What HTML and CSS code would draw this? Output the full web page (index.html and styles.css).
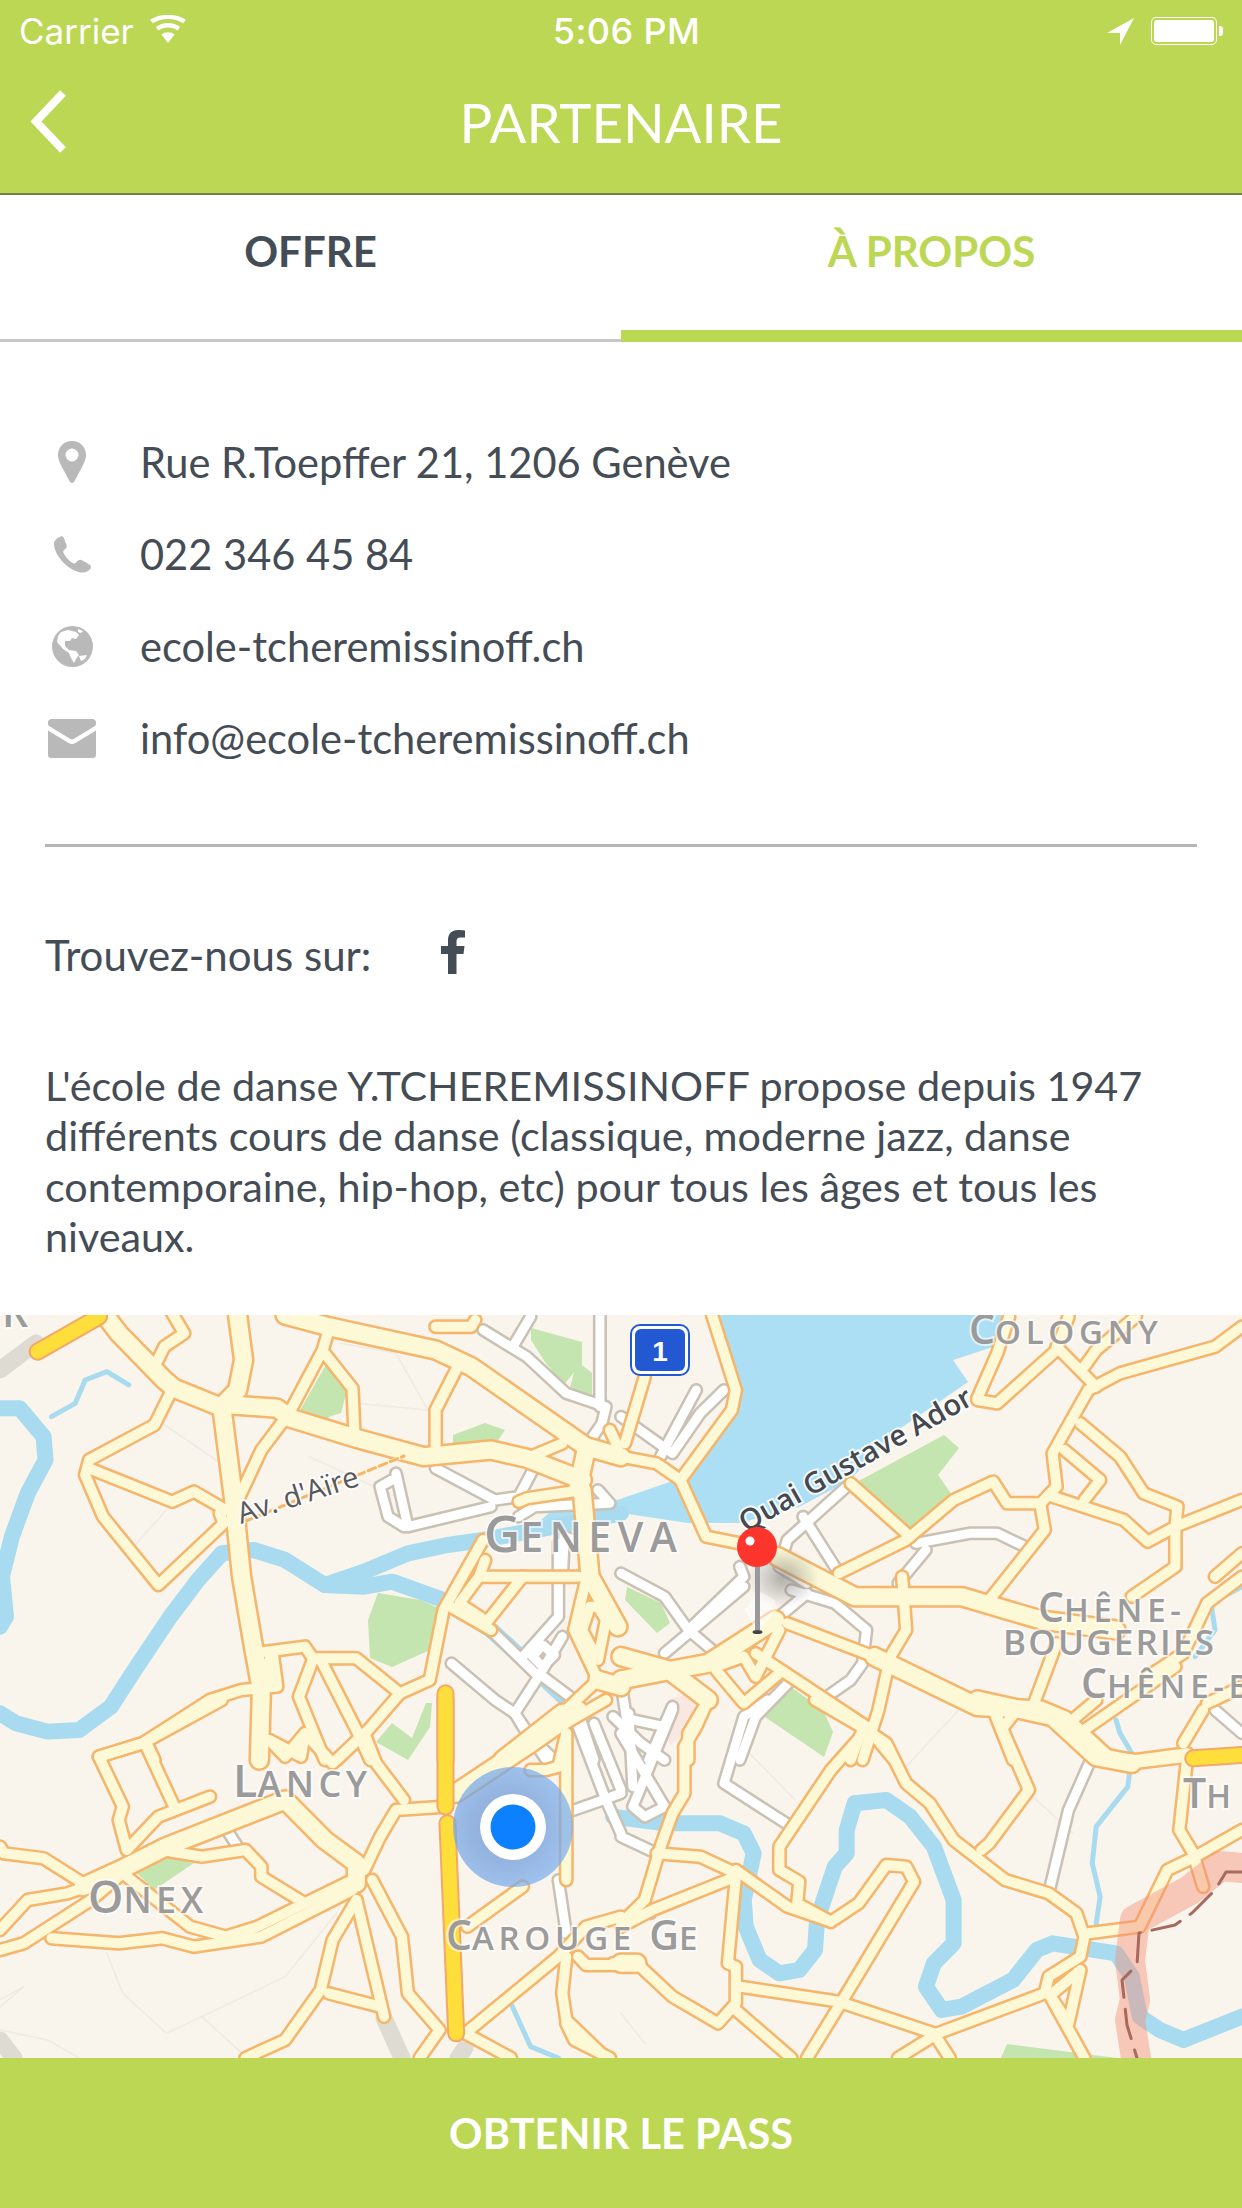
FILE: index.html
```html
<!DOCTYPE html>
<html lang="fr">
<head>
<meta charset="utf-8">
<title>Partenaire</title>
<link rel="stylesheet" href="styles.css">
</head>
<body>
<div class="page">
  <header class="top">
    <div class="status">
      <div class="status-left">
        <span class="carrier">Carrier</span>
        <svg class="wifi" viewBox="0 0 38 28"><path d="M19 28 12.500 19.500C16 16.500 22 16.500 25.500 19.500Z"/><path d="M9.500 15.500 6.800 12C13.500 6.800 24.500 6.800 31.200 12L28.500 15.500C23 11.500 15 11.500 9.500 15.500Z"/><path d="M3.800 8.200 1 4.800C11 -1.800 27-1.800 37 4.800L34.200 8.200C25.500 2.500 12.500 2.500 3.800 8.200Z"/></svg>
      </div>
      <span class="clock">5:06 PM</span>
      <div class="status-right">
        <svg class="arrow" viewBox="0 0 27 27"><path d="M27 0 0 15H13V27Z"/></svg>
        <div class="battery"><div class="battery-fill"></div></div>
        <div class="battery-nub"></div>
      </div>
    </div>
    <div class="nav">
      <svg class="back" viewBox="0 0 38 63"><path d="M33 3 6 31.500 33 60"/></svg>
      <h1 class="nav-title">PARTENAIRE</h1>
    </div>
  </header>

  <nav class="tabs">
    <div class="tab">OFFRE</div>
    <div class="tab tab-active">À PROPOS</div>
  </nav>

  <section class="contact">
    <div class="row">
      <span class="ico"><svg class="ico-pin" viewBox="0 0 28 42"><path fill-rule="evenodd" d="M14 0C6 0 0 6 0 14 0 19 3 24 5 28L12 41C13 42.300 15 42.300 16 41L23 28C25 24 28 19 28 14 28 6 22 0 14 0ZM14 7.500A6.500 6.500 0 1 1 14 20.500 6.500 6.500 0 1 1 14 7.500Z"/></svg></span>
      <span class="row-text">Rue R.Toepffer 21, 1206 Genève</span>
    </div>
    <div class="row">
      <span class="ico"><svg class="ico-phone" viewBox="0 0 38 37"><path d="M8 .5C5 1.500 1.500 4 1 7 .5 14 6 23 13 29 18 33.500 25 37 31 36.500 34 36 38 33.500 38 31 38 29.500 37 29 35.500 28L29.500 24.500C27.500 23.500 26 23.500 24.500 25L22.500 27C21.500 27.800 20.500 27.500 19.500 27 15.500 24.500 13 21.500 10.800 17.500 10 16 10.200 15 11 14L12.800 12.500C14 11 14 10 13.200 8L10.800 2C10.200.5 9.300 0 8 .5Z"/></svg></span>
      <span class="row-text">022 346 45 84</span>
    </div>
    <div class="row">
      <span class="ico"><svg class="ico-globe" viewBox="0 0 41 41"><circle class="globe-disc" cx="20.500" cy="20.500" r="20.500"/><path class="globe-land" d="M9 6 16 4 24 6 27 9 24 13 20 12 18 15 13 15 13 20 17 24 24 25 27 29 24 33 22 37 19 32 17 27 11 23 5 16 6 10Z"/><path class="globe-land" d="M27 30 35 29 33 33 29 35Z"/><path class="globe-land" d="M26 3 31 5 29 7 26 6Z"/></svg></span>
      <span class="row-text">ecole-tcheremissinoff.ch</span>
    </div>
    <div class="row">
      <span class="ico"><svg class="ico-mail" viewBox="0 0 48 39"><path d="M4 0H44C46.500 0 48 1.500 48 3.500V5C48 6 47.300 6.800 46.500 7.300L26 19.800C24.700 20.500 23.300 20.500 22 19.800L1.500 7.300C.7 6.800 0 6 0 5V3.500C0 1.500 1.500 0 4 0Z"/><path d="M0 11.500 20.500 24C23 25.500 25 25.500 27.500 24L48 11.500V36C48 37.800 46.800 39 45 39H3C1.200 39 0 37.800 0 36Z"/></svg></span>
      <span class="row-text">info@ecole-tcheremissinoff.ch</span>
    </div>
  </section>

  <hr class="divider">

  <div class="social">
    <span class="social-label">Trouvez-nous sur:</span>
    <svg class="fb" viewBox="0 0 24 44"><path d="M7 44V24H0V16H7V10C7 3.500 11 0 17 0 20 0 22.500.2 24 .5V7.500H19.500C16.500 7.500 15.500 9 15.500 11.500V16H23.500L22.500 24H15.500V44Z"/></svg>
  </div>

  <p class="about">L'école de danse Y.TCHEREMISSINOFF propose depuis 1947 différents cours de danse (classique, moderne jazz, danse contemporaine, hip-hop, etc) pour tous les âges et tous les niveaux.</p>

  <div class="map">
    <svg class="map-svg" viewBox="0 1315 1242 743" width="1242" height="743">
      <defs>
        <radialGradient id="pin-shadow"><stop offset="0" stop-color="#777" stop-opacity=".55"/><stop offset="1" stop-color="#777" stop-opacity="0"/></radialGradient>
        <radialGradient id="loc-grad" cx=".45" cy=".5" r=".6"><stop offset="0" stop-color="#5f86c4"/><stop offset="1" stop-color="#7fb4f4"/></radialGradient>

        <g id="water-wide">
          <g transform="translate(0 1310) scale(.396 .3333)">
            <path d="M0 295 50 295 110 380 115 450 70 550 30 680 5 800 15 920 0 950"/>
            <path d="M0 1210 40 1240 120 1265 200 1260 280 1190 340 1080 430 920 500 810 560 730 640 720 720 750 820 825 920 785 1030 730 1130 705 1220 690 1400 650 1568 610"/>
            <path d="M820 825 920 830 990 815 1120 870 1240 960 1360 1090 1450 1190"/>
          </g>
          <g transform="translate(621 1700) scale(.396 .3333)">
            <path d="M-20 350 110 370 250 370 310 400 335 460 310 600 315 680 350 780 400 820 450 810 490 750 495 660 540 500 570 460 570 390 590 310 670 300 730 350 790 440 840 600 840 730 790 790 770 860 810 930 860 920 990 840 1050 750 1090 730 1250 760 1290 830 1310 950 1360 990 1420 1020 1568 950"/>
          </g>
        </g>
        <g id="water-thin">
          <g transform="translate(0 1310) scale(.396 .3333)">
            <path d="M130 320 190 280 215 210 270 185 325 225"/>
          </g>
          <g transform="translate(621 1310) scale(.396 .3333)">
            <path d="M1250 1230 1260 1270 1290 1330"/>
            <path d="M1568 830 1490 880 1500 960 1450 1040"/>
          </g>
          <g transform="translate(0 1700) scale(.396 .3333)">
            <path d="M1290 910 1340 1040 1410 1074"/>
          </g>
          <g transform="translate(621 1700) scale(.396 .3333)">
            <path d="M1290 160 1280 260 1200 380 1190 490 1210 590 1200 670"/>
          </g>
        </g>

        <g id="white-roads">
          <g transform="translate(0 1310) scale(.396 .3333)">
            <path d="M1220 60 1330 140 1430 250 1530 290 1520 340 1480 410"/>
            <path d="M1340 20 1300 100"/>
            <path d="M1515 15V290"/>
            <path d="M1100 475 1250 570 1310 560 1350 470"/>
            <path d="M1240 590 1030 650 1000 490"/>
            <path d="M1020 650 980 620 960 530 990 510"/>
            <path d="M1310 620 1350 590 1540 580 1510 540"/>
            <path d="M1410 700V920L1320 1040"/>
            <path d="M1240 960 1360 1100 1300 1210 1330 1270 1400 1350"/>
            <path d="M1420 980 1360 1100"/>
            <path d="M1140 1060 1250 1170 1300 1210"/>
            <path d="M1360 1090 1450 1170 1500 1350"/>
            <path d="M1450 690 1425 680 1420 800"/>
            <path d="M1345 1040 1370 1005 1400 1035 1370 1070Z"/>
          </g>
          <g transform="translate(621 1310) scale(.396 .3333)">
            <path d="M0 320 130 430 200 310 260 240"/>
            <path d="M190 240 100 440"/>
            <path d="M570 530 420 690 400 770 470 820"/>
            <path d="M460 620 540 770"/>
            <path d="M745 700 880 670 950 670 1020 710"/>
            <path d="M770 720 700 820"/>
            <path d="M0 790 110 860 170 960 250 1040"/>
            <path d="M170 960 310 800 300 770"/>
            <path d="M310 830 180 960 110 1030"/>
            <path d="M430 840 540 880 620 960 610 1060 580 1110 520 1160"/>
            <path d="M470 850 390 930"/>
            <path d="M430 1110 340 1220 300 1350"/>
            <path d="M0 1120 30 1350"/>
            <path d="M130 1190 70 1350"/>
            <path d="M30 1230 110 1250"/>
            <path d="M-20 1220 50 1300 110 1350"/>
          </g>
          <g transform="translate(0 1700) scale(.396 .3333)">
            <path d="M570 385 600 440"/>
            <path d="M1450 330 1510 305 1568 280"/>
            <path d="M1410 540 1430 700"/>
            <path d="M1300 40 1380 180"/>
            <path d="M1460 80 1530 300 1568 400"/>
            <path d="M1500 70 1568 270"/>
          </g>
          <g transform="translate(621 1700) scale(.396 .3333)">
            <path d="M1190 170 1130 330 1080 580"/>
            <path d="M430 380 260 250 310 50 370 0"/>
            <path d="M0 100 110 320"/>
            <path d="M130 30 30 320 60 350 110 320"/>
            <path d="M0 410 90 460"/>
            <path d="M60 620 75 640"/>
            <path d="M1500 30 1568 100"/>
            <path d="M20 40 30 260"/>
          </g>
        </g>

        <g id="thin-roads">
          <g transform="translate(0 1310) scale(.396 .3333)">
            <path d="M430 0 465 70 415 110 390 170"/>
            <path d="M820 130 890 235 895 365"/>
            <path d="M1100 430 1100 300 1160 160"/>
            <path d="M430 250 390 345 225 450 215 495 260 620 400 825 565 640 555 610"/>
            <path d="M225 475 435 575 490 545 570 600"/>
            <path d="M830 60 815 120 730 310 660 420 605 560"/>
            <path d="M1420 400 1330 445"/>
            <path d="M640 1030 770 1010 790 1045 900 1045 1010 1150 1085 1110 1120 900 1220 690"/>
            <path d="M1310 575 1330 565 1470 540"/>
            <path d="M1220 800 1460 800"/>
            <path d="M1225 750 1210 800 1160 880 1230 935 1320 800"/>
            <path d="M1130 885 1240 960"/>
            <path d="M1480 810 1450 960 1510 1110 1420 1210"/>
            <path d="M1490 890 1510 890 1530 930 1510 1050 1470 960Z"/>
            <path d="M250 1340 360 1300 530 1170 610 1140 700 1130 690 1040"/>
            <path d="M810 1050 900 1260 935 1350"/>
            <path d="M790 1050 755 1160 820 1350"/>
            <path d="M1010 1150 930 1260 850 1350"/>
            <path d="M370 1300 390 1350"/>
            <path d="M1540 360 1560 410"/>
            <path d="M1100 50 1190 50 1200 30"/>
            <path d="M660 1110 680 1120 680 1050"/>
          </g>
          <g transform="translate(621 1310) scale(.396 .3333)">
            <path d="M230 15 290 240 280 300 150 510 215 680 300 700"/>
            <path d="M60 200 10 400"/>
            <path d="M0 440 90 460 150 510"/>
            <path d="M550 790 720 690 840 570 940 515 975 580 1060 580 1100 530 1090 430 1180 240 1260 190 1500 110 1568 50"/>
            <path d="M580 520 730 680"/>
            <path d="M1060 590 1070 660 930 870"/>
            <path d="M1090 560 1270 630 1330 695 1400 650 1405 590 1320 550 1260 440 1160 340"/>
            <path d="M1400 650 1568 570"/>
            <path d="M1400 650 1400 770 1290 860"/>
            <path d="M1120 420 1210 510 1170 570"/>
            <path d="M900 270 950 280 1100 120 1130 20"/>
            <path d="M900 265 950 130 980 20"/>
            <path d="M1100 110 1200 230"/>
            <path d="M1170 170 1200 120 1300 20"/>
            <path d="M710 800 720 960 680 1040 650 1200 610 1350"/>
            <path d="M420 940 640 1040"/>
            <path d="M1220 1340 1300 1350 1430 1330"/>
            <path d="M400 960 340 1100 310 1040 240 1070"/>
            <path d="M340 1030 620 1250 690 1350"/>
            <path d="M240 1080 310 1180 400 1090"/>
            <path d="M1100 1000 1040 1190"/>
            <path d="M1400 1070 1170 1260"/>
            <path d="M1568 800 1480 880 1420 1030 1330 1100"/>
            <path d="M120 1090 220 1170 170 1270 170 1350"/>
            <path d="M580 1350 610 1260"/>
            <path d="M940 1200 990 1350"/>
            <path d="M1000 1200 960 1260"/>
            <path d="M1568 730 1500 800"/>
            <path d="M1480 1180 1568 1130"/>
          </g>
          <g transform="translate(0 1700) scale(.396 .3333)">
            <path d="M250 170 360 130 560 0"/>
            <path d="M250 170 310 320 300 360 320 450 400 350 530 290"/>
            <path d="M370 140 440 320"/>
            <path d="M0 440 10 460 110 475 210 550"/>
            <path d="M0 690 70 600 170 580 220 560"/>
            <path d="M0 750 60 730 230 600 320 510"/>
            <path d="M130 715 300 730 410 715 490 740 660 710 890 570"/>
            <path d="M320 530 480 680 570 710 650 680 770 610 660 530 660 500 620 450 510 470 430 455"/>
            <path d="M770 610 890 540"/>
            <path d="M920 510 960 410 1000 330 1120 320"/>
            <path d="M900 600 840 720 810 870 720 1020 620 1074"/>
            <path d="M900 600 960 900 970 950"/>
            <path d="M830 880 960 920"/>
            <path d="M940 540 1015 710 1030 880 1110 990 1060 1074"/>
            <path d="M655 0V160"/>
            <path d="M680 120 760 170 770 100 720 170 680 120"/>
            <path d="M770 100 840 190 920 100 950 190 1020 300"/>
            <path d="M1150 280 1340 130 1530 0"/>
            <path d="M1180 680 1320 560"/>
            <path d="M1175 1000 1410 770 1480 680 1568 650"/>
            <path d="M1430 770 1420 880 1430 960 1530 1074"/>
            <path d="M1460 770 1480 795 1568 795"/>
            <path d="M1175 1000 1290 1074"/>
            <path d="M1410 200 1430 100"/>
            <path d="M1430 100V540"/>
            <path d="M1340 210 1380 210 1410 200"/>
            <path d="M1430 970 1450 1020 1540 1074"/>
          </g>
          <g transform="translate(621 1700) scale(.396 .3333)">
            <path d="M220 0 190 80 160 140 160 280 130 340 100 440 60 600 0 670"/>
            <path d="M490 0 620 90 670 130 720 250 780 310 840 420 970 540 1080 580 1150 640 1170 710 1160 770 1080 830 1070 880 800 1000 700 1074"/>
            <path d="M620 90 530 210 400 440 400 510 450 545 445 610 530 665 600 610 670 495 720 500 740 545 560 900 470 1074"/>
            <path d="M-20 790 40 790 130 890 245 970 290 910 290 800 270 790 290 530 80 630 0 680"/>
            <path d="M290 510 420 620 530 665"/>
            <path d="M90 460 200 470 290 520"/>
            <path d="M290 930 430 1074"/>
            <path d="M300 860 550 905 790 1000 830 1074"/>
            <path d="M950 50 1030 270 930 430 910 450"/>
            <path d="M1430 170 1410 390 1450 470 1568 390"/>
            <path d="M1450 470 1380 510 1310 680 1180 700"/>
            <path d="M1450 480 1470 560"/>
            <path d="M1420 130 1470 30"/>
            <path d="M1090 880 1160 810 1130 970 1080 880 1170 1074"/>
            <path d="M1190 170 1290 190 1430 170"/>
            <path d="M1130 70 1200 0"/>
          </g>
        </g>

        <g id="wide-roads">
          <g transform="translate(0 1310) scale(.396 .3333)">
            <path d="M265 15 300 70 415 210 440 235 555 290 590 285 700 295 735 325 900 385 1070 440 1240 420 1330 445 1470 510"/>
            <path d="M600 15 615 150 600 240 560 290 590 570 610 800 640 1010 660 1140 655 1350"/>
            <path d="M720 15 830 50 1100 120 1190 170 1480 410 1568 440"/>
            <path d="M1470 540 1490 800 1560 950"/>
            <path d="M1510 1110 1568 1130"/>
            <path d="M1420 1210 1270 1350"/>
            <path d="M1480 420 1460 530"/>
          </g>
          <g transform="translate(621 1310) scale(.396 .3333)">
            <path d="M395 740 590 860 860 860 1060 930 1250 960"/>
            <path d="M640 1040 900 1190 1060 1200 1120 1230 1220 1340"/>
            <path d="M0 1110 130 1080 220 1060 390 930"/>
            <path d="M0 1040 120 1080 220 1170"/>
          </g>
          <g transform="translate(0 1700) scale(.396 .3333)">
            <path d="M320 500 420 440 720 300 820 420 900 490 900 550"/>
            <path d="M210 560 320 500"/>
            <path d="M1150 280 1340 130 1460 30"/>
          </g>
          <g transform="translate(621 1700) scale(.396 .3333)">
            <path d="M900 0 1090 50 1200 170 1290 190"/>
            <path d="M0 790 40 790"/>
          </g>
        </g>

        <g id="highways">
          <g transform="translate(0 1310) scale(.396 .3333)">
            <path d="M95 125 250 20"/>
            <path d="M1125 1150V1350"/>
          </g>
          <g transform="translate(0 1700) scale(.396 .3333)">
            <path d="M1125 0V320"/>
            <path d="M1130 370 1152 1000"/>
          </g>
          <g transform="translate(621 1700) scale(.396 .3333)">
            <path d="M1445 175 1568 165"/>
          </g>
        </g>
      </defs>

      <rect class="land" x="0" y="1315" width="1242" height="743"/>

      <g transform="translate(0 1310) scale(.396 .3333)" class="lines">
        <path d="M410 340 570 470"/><path d="M860 100 1000 130 1080 300"/><path d="M900 280 1080 300"/><path d="M780 440 1000 560"/><path d="M330 720 420 600"/>
      </g>
      <g transform="translate(0 1700) scale(.396 .3333)" class="lines">
        <path d="M0 900 60 860 40 880 0 920"/><path d="M270 760 310 880 420 1000 510 950 620 1070"/><path d="M510 950 720 830 850 640"/><path d="M0 990 120 1020 200 1074"/>
      </g>
      <g transform="translate(621 1700) scale(.396 .3333)" class="lines">
        <path d="M0 940 60 1030"/><path d="M720 200 860 20"/><path d="M300 130 440 300"/><path d="M1040 290 1140 400"/>
      </g>

      <g class="grey-road">
        <path d="M0 1370 36 1343"/><path d="M0 2040 14 2058"/><path d="M384 2018 402 2058"/><path d="M465 2048 458 2058"/>
      </g>

      <path class="park" d="M327 1363 347 1390 341 1413 329 1417 327 1422 299 1412Z"/>
      <path class="park" d="M453 1435 485 1423 505 1430 495 1445 453 1447Z"/>
      <path class="park" d="M378 1593 420 1600 439 1608 430 1650 392 1667 370 1658 368 1620Z"/>
      <path class="park" d="M531 1328 582 1342 582 1365 592 1373 592 1395 570 1388 574 1372 564 1385 545 1362 531 1340Z"/>
      <path class="park" d="M376 1742 392 1723 412 1738 426 1703 432 1703 430 1727 408 1760Z"/>
      <path class="park" d="M137 1873 166 1857 194 1863 154 1890Z"/>
      <path class="park" d="M855 1483 944 1435 959 1448 938 1475 952 1495 909 1533Z"/>
      <path class="park" d="M627 1587 661 1603 670 1623 657 1633 625 1600Z"/>
      <path class="park" d="M791 1687 823 1710 833 1732 824 1757 765 1717Z"/>
      <path class="park" d="M1001 2058 1007 2044 1117 2058Z"/>
      <path class="pink" d="M668 1700 700 1690 705 1715 670 1745 662 1720Z"/>

      <path class="lake" d="M720 1315H1010L993 1347 953 1360 968 1382 898 1430 850 1480 799 1507 740 1523 688 1523 621 1513 560 1503 530 1530 690 1475 735 1403Z"/>
      <use href="#water-wide" class="water-wide"/>
      <use href="#water-thin" class="water-thin"/>

      <use href="#white-roads" class="white-case"/>
      <use href="#white-roads" class="white-fill"/>
      <use href="#thin-roads" class="thin-case"/>
      <use href="#wide-roads" class="wide-case"/>
      <use href="#thin-roads" class="thin-fill"/>
      <use href="#wide-roads" class="wide-fill"/>

      <path class="dash-bg" d="M246 1521 404 1456"/>
      <path class="dash" d="M246 1521 404 1456"/>

      <use href="#highways" class="hw-case"/>
      <use href="#highways" class="hw-fill"/>

      <path class="rail-zone" d="M1242 1868 1220 1866 1190 1890 1135 1920 1130 1960 1135 2000 1130 2020 1136 2058"/>
      <path class="rail" d="M1242 1872 1226 1872 1215 1890 1192 1913 1175 1925 1139 1933 1137 1965 1122 1980 1127 2025 1137 2058"/>

      <text class="lbl" x="2" y="1327"><tspan class="lg">R</tspan></text>
      <text class="lbl" x="484" y="1552"><tspan class="xl">G</tspan><tspan class="xm">ENEVA</tspan></text>
      <text class="lbl" x="969" y="1344"><tspan class="lg">C</tspan><tspan class="md">OLOGNY</tspan></text>
      <text class="lbl" x="1038" y="1622"><tspan class="lg">C</tspan><tspan class="md">HÊNE-</tspan></text>
      <text class="lbl" x="1003" y="1655"><tspan class="md2">BOUGERIES</tspan></text>
      <text class="lbl" x="1081" y="1698"><tspan class="lg">C</tspan><tspan class="md">HÊNE-B</tspan></text>
      <text class="lbl" x="233" y="1797"><tspan class="lg2">L</tspan><tspan class="md3">ANCY</tspan></text>
      <text class="lbl" x="88" y="1913"><tspan class="lg2">O</tspan><tspan class="md3">NEX</tspan></text>
      <text class="lbl" x="446" y="1950"><tspan class="lg">C</tspan><tspan class="md">AROUGE </tspan><tspan class="lg">G</tspan><tspan class="md">E</tspan></text>
      <text class="lbl" x="1183" y="1808"><tspan class="lg">T</tspan><tspan class="md">H</tspan></text>

      <text class="street" transform="translate(241 1524) rotate(-18)">Av. d'Aïre</text>
      <text class="street street-lg" transform="translate(746 1533) rotate(-29.500)">Quai Gustave Ador</text>

      <rect class="shield-outer" x="631" y="1325" width="58" height="50" rx="9"/>
      <rect class="shield-inner" x="635" y="1329" width="50" height="42" rx="6"/>
      <text class="shield-text" x="660" y="1361">1</text>

      <ellipse class="pin-shadow" cx="783" cy="1578" rx="36" ry="30"/>
      <path class="pin-haze" d="M757 1590 775 1600 777 1610 757 1633 745 1610Z"/>
      <rect class="pin-stem" x="755" y="1560" width="5" height="70"/>
      <ellipse class="pin-foot" cx="757.500" cy="1632" rx="5" ry="2"/>
      <circle class="pin-head" cx="757" cy="1547" r="20"/>
      <circle class="pin-shine" cx="750" cy="1541" r="4.500"/>

      <circle class="loc-halo" cx="513" cy="1827" r="60"/>
      <circle class="loc-ring" cx="513" cy="1827" r="33"/>
      <circle class="loc-dot" cx="513" cy="1827" r="22.500"/>
    </svg>
  </div>

  <footer class="cta">OBTENIR LE PASS</footer>
</div>
</body>
</html>
```

FILE: styles.css
```css
* { box-sizing: border-box; }
html, body { margin: 0; padding: 0; }
body { background: #fff; font-family: Lato, "Liberation Sans", sans-serif; color: #444c56; }

.page { width: 1242px; height: 2208px; display: flex; flex-direction: column; overflow: hidden; }

/* header */
.top { height: 195px; background: #bbd754; border-bottom: 2px solid #6f7f45; color: #fff; display: flex; flex-direction: column; flex: none; }
.status { height: 62px; display: grid; grid-template-columns: 1fr auto 1fr; align-items: center; padding: 0 16px 0 19px; font-family: Inter, "Liberation Sans", sans-serif; }
.status-left { display: flex; align-items: center; gap: 15px; }
.carrier { font-size: 35px; line-height: 1; }
.wifi { width: 38px; height: 28px; fill: #fff; margin-top: -4px; }
.clock { font-size: 36px; line-height: 1; font-weight: 500; letter-spacing: .4px; margin-left: 8px; }
.status-right { display: flex; align-items: center; justify-content: flex-end; }
.arrow { width: 27px; height: 27px; fill: #fff; margin-right: 17px; }
.battery { width: 66px; height: 28px; border: 1.500px solid #fff; border-radius: 5px; padding: 2px; }
.battery-fill { width: 100%; height: 100%; background: #fff; border-radius: 3px; }
.battery-nub { width: 4px; height: 10px; background: #fff; border-radius: 0 3px 3px 0; margin-left: 2px; margin-right: 3px; }
.nav { position: relative; flex: 1; display: flex; align-items: center; justify-content: center; padding-bottom: 10px; }
.nav-title { margin: 0; font-size: 54.500px; font-weight: 400; line-height: 1; }
.back { position: absolute; left: 30px; top: 28px; width: 38px; height: 63px; fill: none; stroke: #fff; stroke-width: 8; }

/* tabs */
.tabs { height: 147px; display: grid; grid-template-columns: 1fr 1fr; flex: none; }
.tab { display: flex; align-items: center; justify-content: center; padding-bottom: 33px; font-size: 42px; font-weight: 700; border-bottom: 3px solid #c8c8c8; color: #444c56; }
.tab-active { color: #bbd754; border-bottom: 12px solid #bbd754; padding-bottom: 24px; }

/* contact */
.contact { padding: 74px 0 0 45px; display: flex; flex-direction: column; flex: none; }
.row { height: 92px; display: flex; align-items: center; gap: 41px; font-size: 41.600px; }
.ico { width: 54px; height: 54px; display: flex; align-items: center; justify-content: center; flex: none; fill: #b9b9b9; }
.ico-pin { width: 28px; height: 42px; }
.ico-phone { width: 38px; height: 37px; }
.ico-globe { width: 41px; height: 41px; }
.ico-mail { width: 48px; height: 39px; }
.globe-land { fill: #fff; }
.globe-disc { fill: #b9b9b9; }

.divider { margin: 60px 45px 0; height: 3px; border: 0; background: #b5b5b5; flex: none; }

.social { padding: 0 45px; margin-top: 60px; height: 96px; display: flex; align-items: center; gap: 70px; font-size: 42px; flex: none; }
.fb { width: 24px; height: 44px; fill: #444c56; margin-top: -6px; }

.about { margin: 57px 45px 0; font-size: 41.300px; line-height: 50.300px; flex: none; }

/* map */
.map { margin-top: auto; height: 743px; flex: none; overflow: hidden; }
.map-svg { display: block; }
.map-svg path { vector-effect: non-scaling-stroke; fill: none; stroke-linejoin: round; stroke-linecap: round; }
.land { fill: #f9f4ec; }
.lines { stroke: #efeae3; stroke-width: 1.500; }
.grey-road { stroke: #dedcd2; stroke-width: 17; }
.map-svg path.park { fill: #c4e5af; }
.map-svg path.pink { fill: #f9e7e1; }
.map-svg path.lake { fill: #addff4; }
.water-wide { stroke: #a8dbef; stroke-width: 16; }
.water-thin { stroke: #a8dbef; stroke-width: 5; }
.white-case { stroke: #c9c1b4; stroke-width: 14; }
.white-fill { stroke: #fff; stroke-width: 9; }
.thin-case { stroke: #f5b56a; stroke-width: 15; }
.thin-fill { stroke: #fdf8d6; stroke-width: 10; }
.wide-case { stroke: #f5b56a; stroke-width: 22; }
.wide-fill { stroke: #fdf8d6; stroke-width: 17; }
.hw-case { stroke: #f2a86c; stroke-width: 18; }
.hw-fill { stroke: #fede3a; stroke-width: 14; }
.map-svg path.dash-bg { stroke: #fdf8d6; stroke-width: 4; }
.map-svg path.dash { stroke: #f5b56a; stroke-width: 3; stroke-dasharray: 8 4; }
.map-svg path.rail-zone { stroke: #f3907b; stroke-opacity: .45; stroke-width: 30; }
.map-svg path.rail { stroke: #a8695e; stroke-width: 3; stroke-dasharray: 30 12; }

.lbl { font-family: "Open Sans", sans-serif; font-weight: 600; fill: #9b9b9b; stroke: #fff; stroke-opacity: .65; stroke-width: 4; paint-order: stroke; }
.xl { font-size: 50px; }
.xm { font-size: 41px; letter-spacing: 6.500px; }
.lg { font-size: 41px; }
.lg2 { font-size: 45px; }
.md { font-size: 33px; letter-spacing: 4.700px; }
.md2 { font-size: 35px; letter-spacing: 2.200px; }
.md3 { font-size: 36px; letter-spacing: 4.500px; }
.street { font-family: "Open Sans", sans-serif; font-size: 29px; fill: #57595c; stroke: #fff; stroke-opacity: .85; stroke-width: 4; paint-order: stroke; }
.street-lg { font-size: 29px; fill: #45484c; font-weight: 600; }

.shield-outer { fill: #fff; stroke: #2358d3; stroke-width: 2; }
.shield-inner { fill: #2358d3; }
.shield-text { font-family: "Liberation Sans", sans-serif; font-size: 28px; font-weight: 700; fill: #fff; text-anchor: middle; }

.pin-shadow { fill: url(#pin-shadow); }
.map-svg path.pin-haze { fill: #fff; fill-opacity: .5; }
.pin-stem { fill: #9a9a9e; }
.pin-foot { fill: #444; }
.pin-head { fill: #fd352c; }
.pin-shine { fill: #fff; }

.loc-halo { fill: url(#loc-grad); fill-opacity: .72; }
.loc-ring { fill: #fff; }
.loc-dot { fill: #0d80ff; }

/* call to action */
.cta { height: 150px; flex: none; background: #bbd754; color: #fff; display: flex; align-items: center; justify-content: center; font-size: 41.500px; font-weight: 700; }
```
